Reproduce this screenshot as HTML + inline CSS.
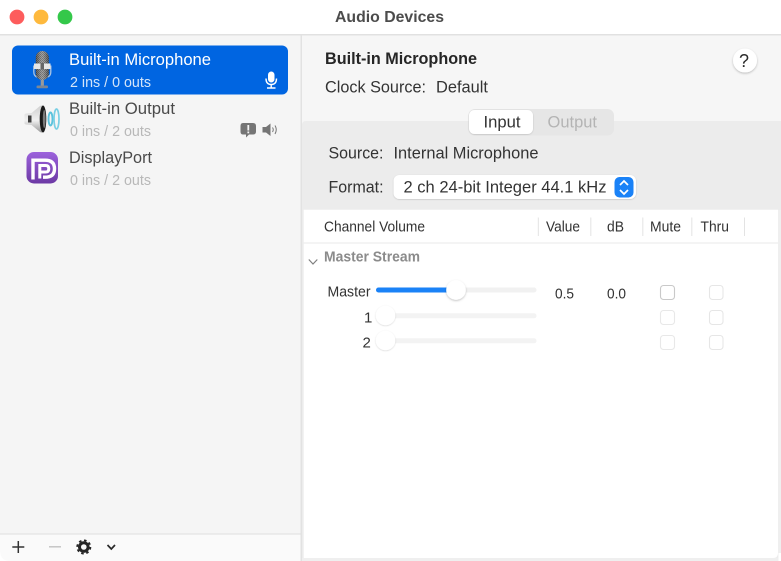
<!DOCTYPE html>
<html><head><meta charset="utf-8"><title>Audio Devices</title>
<style>
html,body{margin:0;padding:0;width:781px;height:561px;overflow:hidden;background:#fff}
svg{display:block;position:absolute;left:0;top:0;filter:blur(.25px)}
text{font-family:"Liberation Sans",sans-serif;font-size:15px;fill:#2b2b2b}
.b{font-weight:bold}
</style></head><body>
<svg width="781" height="561" viewBox="0 0 781 561" xmlns="http://www.w3.org/2000/svg">
<defs>
<linearGradient id="dp" x1="0" y1="0" x2="0" y2="1"><stop offset="0" stop-color="#9c62dc"/><stop offset="1" stop-color="#6c39a4"/></linearGradient>
<pattern id="mesh" width="2" height="2" patternUnits="userSpaceOnUse"><rect width="2" height="2" fill="#8f8f8f"/><rect width="1" height="1" fill="#555"/><rect x="1" y="1" width="1" height="1" fill="#5e5e5e"/></pattern>
<linearGradient id="shade" x1="0" y1="0" x2="1" y2="0"><stop offset="0" stop-color="#000" stop-opacity=".35"/><stop offset=".5" stop-color="#fff" stop-opacity=".2"/><stop offset="1" stop-color="#000" stop-opacity=".35"/></linearGradient>
<linearGradient id="spk" x1="0" y1="0" x2="0" y2="1"><stop offset="0" stop-color="#cfcfcf"/><stop offset=".55" stop-color="#f0f0f0"/><stop offset="1" stop-color="#9a9a9a"/></linearGradient>
<filter id="sh" x="-30%" y="-30%" width="160%" height="170%"><feDropShadow dx="0" dy="1" stdDeviation="1" flood-color="#000" flood-opacity=".25"/></filter>
<filter id="sh2" x="-30%" y="-30%" width="160%" height="170%"><feDropShadow dx="0" dy=".5" stdDeviation=".8" flood-color="#000" flood-opacity=".2"/></filter>
</defs>

<!-- window -->
<rect width="781" height="561" fill="#fff"/>
<rect x="0" y="34" width="781" height="1.5" fill="#e1e1e1"/>
<circle cx="17" cy="17" r="7.4" fill="#fd5c5c"/>
<circle cx="41" cy="17" r="7.4" fill="#feb93d"/>
<circle cx="65" cy="17" r="7.4" fill="#34c84a"/>
<text x="335" y="22" class="b" style="font-size:16px;fill:#4c4c4c" textLength="109" lengthAdjust="spacingAndGlyphs">Audio Devices</text>

<!-- sidebar -->
<path d="M0 35.500H301V534H0Z" fill="#f5f5f5"/>
<rect x="300.500" y="35.500" width="1.500" height="525.500" fill="#e2e2e2"/>
<rect x="0" y="533.500" width="301" height="1" fill="#dedede"/>
<path d="M0 534.500H300.500V561H10Q0 561 0 550Z" fill="#fafafa"/>
<rect x="12" y="45.500" width="276" height="49" rx="6" fill="#0065e1"/>

<!-- mic icon -->
<path d="M33.800 65.500V72Q33.800 76 37 77M50.800 65.500V72Q50.800 76 47.500 77" fill="none" stroke="#a9c4e4" stroke-width="1.300"/>
<rect x="35.800" y="51" width="13" height="29" rx="6.500" fill="url(#mesh)"/>
<rect x="35.800" y="51" width="13" height="29" rx="6.500" fill="url(#shade)"/>
<rect x="34" y="63.500" width="6.500" height="5.500" fill="#e6e6e6"/>
<rect x="44" y="63.500" width="6.500" height="5.500" fill="#e6e6e6"/>
<rect x="40.500" y="63" width="3.500" height="6.500" fill="#666"/>
<rect x="40.700" y="80" width="3.200" height="6" fill="#9a9a9a"/>
<rect x="36.500" y="85.500" width="11.500" height="2.800" rx="1.200" fill="#7d8794"/>

<!-- speaker icon -->
<path d="M24.500 116Q24 114 26 113.500L31.500 113L40 106Q43 104.500 44 108V130Q43 133.500 40 132L31.500 125L26 124.500Q24 124 24.500 122Z" fill="url(#spk)"/>
<rect x="28" y="115.500" width="3.500" height="7" fill="#3e3e3e"/>
<ellipse cx="43" cy="119" rx="3.300" ry="13.500" fill="#1a1a1a"/>
<ellipse cx="44.200" cy="119" rx="1.400" ry="9" fill="#7a7a7a"/>
<ellipse cx="50.500" cy="119" rx="2" ry="6.500" fill="none" stroke="#5cc2dc" stroke-width="1.900"/>
<ellipse cx="56.500" cy="119" rx="2.500" ry="10" fill="none" stroke="#79cfe4" stroke-width="1.700"/>

<!-- displayport icon -->
<rect x="26.500" y="152" width="31.500" height="31.500" rx="7.500" fill="url(#dp)"/>
<path d="M33 179.500V160.200H45Q54.500 160.200 54.500 168.700Q54.500 177.200 45 177.200H43" fill="none" stroke="#fff" stroke-width="3.400"/>
<path d="M39.800 178.500V165.500H45.500Q48.800 165.500 48.800 168.700Q48.800 172 45.500 172H41" fill="none" stroke="#fff" stroke-width="3"/>

<!-- sidebar text -->
<text x="69" y="65" style="font-size:17px;fill:#fff" textLength="142" lengthAdjust="spacingAndGlyphs">Built-in Microphone</text>
<text x="70" y="87" style="font-size:15px;fill:#d5e5f9" textLength="81" lengthAdjust="spacingAndGlyphs">2 ins / 0 outs</text>
<text x="69" y="114" style="font-size:17px;fill:#4a4a4a" textLength="106" lengthAdjust="spacingAndGlyphs">Built-in Output</text>
<text x="70" y="136" style="font-size:15px;fill:#b8b8b8" textLength="81" lengthAdjust="spacingAndGlyphs">0 ins / 2 outs</text>
<text x="69" y="163" style="font-size:17px;fill:#4a4a4a" textLength="83" lengthAdjust="spacingAndGlyphs">DisplayPort</text>
<text x="70" y="185" style="font-size:15px;fill:#b8b8b8" textLength="81" lengthAdjust="spacingAndGlyphs">0 ins / 2 outs</text>

<!-- small mic glyph -->
<rect x="268" y="71.500" width="6.500" height="11" rx="3.250" fill="#fff"/>
<path d="M266 78.500Q266 84.500 271.200 84.500Q276.500 84.500 276.500 78.500M271.200 84.500V87.500M267 88H275.500" fill="none" stroke="#fff" stroke-width="1.400"/>

<!-- alert + speaker -->
<path d="M243 123H253Q256 123 256 126V131.500Q256 134.500 253 134.500H249L246 137.500V134.500H243Q240.500 134.500 240.500 131.500V126Q240.500 123 243 123Z" fill="#757575"/>
<rect x="247.400" y="125" width="1.800" height="5.500" fill="#f5f5f5"/>
<rect x="247.400" y="131.500" width="1.800" height="1.800" fill="#f5f5f5"/>
<path d="M262.500 127H266L270.500 123.500V136L266 132.500H262.500Z" fill="#757575"/>
<path d="M272.500 127.500Q274 129.800 272.500 132M275 125.500Q277.500 129.800 275 134" fill="none" stroke="#757575" stroke-width="1"/>

<!-- bottom toolbar -->
<path d="M18.300 541V553M12.300 547H24.300" stroke="#333" stroke-width="1.500"/>
<path d="M49 546.800H61" stroke="#c6c6c6" stroke-width="1.500"/>
<circle cx="83.800" cy="547" r="4.300" fill="none" stroke="#262626" stroke-width="3"/>
<circle cx="83.800" cy="547" r="6.600" fill="none" stroke="#262626" stroke-width="1.800" stroke-dasharray="2.600 2.580"/>
<path d="M107.500 545L111.300 549L115 545" fill="none" stroke="#2a2a2a" stroke-width="1.700"/>

<!-- right panel -->
<rect x="302" y="35.500" width="479" height="525.500" fill="#f6f6f6"/>
<path d="M302 125Q302 121 306 121H781V561H302Z" fill="#ececec"/>
<path d="M303.700 209.800H778V553Q778 558 773 558H303.700Z" fill="#fff"/>
<rect x="778" y="209.800" width="3" height="352" fill="#efefef"/>
<rect x="778.500" y="553" width="2.500" height="8" fill="#fff"/>
<text x="325" y="64" class="b" style="font-size:17px;fill:#262626" textLength="152" lengthAdjust="spacingAndGlyphs">Built-in Microphone</text>
<text x="325" y="92.500" style="font-size:17px;fill:#333" textLength="101" lengthAdjust="spacingAndGlyphs">Clock Source:</text>
<text x="436" y="92.500" style="font-size:17px;fill:#333" textLength="52" lengthAdjust="spacingAndGlyphs">Default</text>

<circle cx="745" cy="60.500" r="12" fill="#fff" filter="url(#sh)"/>
<text x="739" y="67" style="font-size:18px;fill:#2a2a2a">?</text>

<!-- tabs -->
<rect x="468.500" y="109" width="145.500" height="26.500" rx="6.500" fill="#e6e6e6"/>
<rect x="469" y="110" width="64" height="24" rx="5.500" fill="#fff" filter="url(#sh2)"/>
<text x="483.500" y="127.500" style="font-size:17px;fill:#333" textLength="37" lengthAdjust="spacingAndGlyphs">Input</text>
<text x="547.500" y="127.500" style="font-size:17px;fill:#b4b4b4" textLength="49.500" lengthAdjust="spacingAndGlyphs">Output</text>

<text x="328.500" y="158.500" style="font-size:17px;fill:#333" textLength="55" lengthAdjust="spacingAndGlyphs">Source:</text>
<text x="393.500" y="158.500" style="font-size:17px;fill:#333" textLength="145" lengthAdjust="spacingAndGlyphs">Internal Microphone</text>
<text x="328.500" y="192.500" style="font-size:17px;fill:#333" textLength="55" lengthAdjust="spacingAndGlyphs">Format:</text>

<!-- popup -->
<rect x="393.500" y="175" width="242.500" height="24" rx="6" fill="#fff" filter="url(#sh2)"/>
<text x="403.500" y="192.500" style="font-size:17px;fill:#333" textLength="203" lengthAdjust="spacingAndGlyphs">2 ch 24-bit Integer 44.1 kHz</text>
<rect x="614.500" y="177" width="19" height="20.500" rx="5" fill="#1a82f7"/>
<path d="M620 185L624 181L628 185M620 190L624 194L628 190" fill="none" stroke="#fff" stroke-width="1.700"/>

<!-- table header -->
<text x="324" y="231.500" style="font-size:15px;fill:#333" textLength="101" lengthAdjust="spacingAndGlyphs">Channel Volume</text>
<text x="546" y="231.500" style="font-size:15px;fill:#333" textLength="34" lengthAdjust="spacingAndGlyphs">Value</text>
<text x="607" y="231.500" style="font-size:15px;fill:#333" textLength="17" lengthAdjust="spacingAndGlyphs">dB</text>
<text x="650" y="231.500" style="font-size:15px;fill:#333" textLength="31" lengthAdjust="spacingAndGlyphs">Mute</text>
<text x="700.500" y="231.500" style="font-size:15px;fill:#333" textLength="28.500" lengthAdjust="spacingAndGlyphs">Thru</text>
<path d="M538.300 217.500V236M590.800 217.500V236M642.800 217.500V236M691.800 217.500V236M744.500 217.500V236" stroke="#e3e3e3" stroke-width="1"/>
<rect x="303.700" y="242.500" width="474.300" height="1" fill="#e8e8e8"/>

<text x="324" y="261.500" class="b" style="font-size:14.500px;fill:#8b8b8b" textLength="96" lengthAdjust="spacingAndGlyphs">Master Stream</text>
<path d="M308.800 259.500L313 264L317.300 259.500" fill="none" stroke="#7f7f7f" stroke-width="1.200"/>

<!-- rows -->
<text x="327.500" y="296.500" style="font-size:15px;fill:#333" textLength="43" lengthAdjust="spacingAndGlyphs">Master</text>
<text x="364" y="322.500" style="font-size:15px;fill:#333">1</text>
<text x="362.500" y="347.500" style="font-size:15px;fill:#333">2</text>

<rect x="376" y="287.500" width="160.500" height="5" rx="2.500" fill="#f1f1f1"/>
<rect x="376" y="287.500" width="75" height="5" rx="2.500" fill="#1a82f7"/>
<circle cx="456" cy="290" r="9.800" fill="#fff" filter="url(#sh)"/>
<rect x="376" y="313.300" width="160.500" height="5" rx="2.500" fill="#f3f3f3"/>
<circle cx="385.500" cy="315.500" r="9.800" fill="#fff" filter="url(#sh2)"/>
<rect x="376" y="338.300" width="160.500" height="5" rx="2.500" fill="#f3f3f3"/>
<circle cx="385.500" cy="340.500" r="9.800" fill="#fff" filter="url(#sh2)"/>

<text x="555" y="298.500" style="font-size:15px;fill:#333" textLength="19" lengthAdjust="spacingAndGlyphs">0.5</text>
<text x="607" y="298.500" style="font-size:15px;fill:#333" textLength="19" lengthAdjust="spacingAndGlyphs">0.0</text>

<g fill="#fff" stroke-width="1.100">
<rect x="660.500" y="285.500" width="14" height="14" rx="3" stroke="#c9c9c9"/>
<rect x="709.500" y="285.500" width="13.500" height="14" rx="3" stroke="#e6e6e6"/>
<rect x="660.500" y="310.500" width="14" height="14" rx="3" stroke="#e8e8e8"/>
<rect x="709.500" y="310.500" width="13.500" height="14" rx="3" stroke="#e6e6e6"/>
<rect x="660.500" y="335.500" width="14" height="14" rx="3" stroke="#e8e8e8"/>
<rect x="709.500" y="335.500" width="13.500" height="14" rx="3" stroke="#e6e6e6"/>
</g>
<rect x="302" y="558" width="476" height="3" fill="#efefef"/>
</svg>
</body></html>
